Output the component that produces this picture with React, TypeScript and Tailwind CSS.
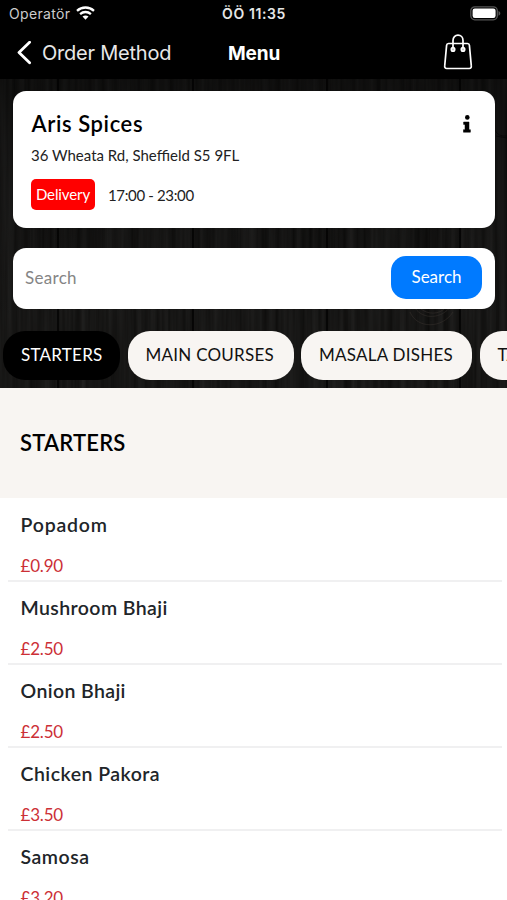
const items = [
  { name: "Popadom", price: "£0.90", cls: "tracking-[0.8px]" },
  { name: "Mushroom Bhaji", price: "£2.50", cls: "tracking-[0.4px]" },
  { name: "Onion Bhaji", price: "£2.50", cls: "tracking-[0.38px]" },
  { name: "Chicken Pakora", price: "£3.50", cls: "tracking-[0.48px]" },
  { name: "Samosa", price: "£3.20", cls: "tracking-[0.5px]" },
];

const categories = [
  { label: "STARTERS", cls: "w-[117px] bg-black text-white" },
  { label: "MAIN COURSES", cls: "w-[166px] bg-[#f8f5f2] text-[#111]" },
  { label: "MASALA DISHES", cls: "w-[171px] bg-[#f8f5f2] text-[#111]" },
  { label: "TANDOORI DISHES", cls: "w-[190px] bg-[#f8f5f2] text-[#111]" },
];

function Wood() {
  const seams = [57, 192, 326, 459];
  return (
    <svg className="absolute inset-0 h-full w-full" viewBox="0 0 507 309" preserveAspectRatio="none" aria-hidden="true">
      <filter id="grain" x="0" y="0" width="100%" height="100%" colorInterpolationFilters="sRGB">
        <feTurbulence type="fractalNoise" baseFrequency="0.16 0.004" numOctaves="4" seed="8" />
        <feColorMatrix values="0.11 0 0 0 0.034  0.11 0 0 0 0.032  0.11 0 0 0 0.028  0 0 0 0 1" />
      </filter>
      <linearGradient id="shade" x1="0" y1="0" x2="0" y2="1">
        <stop offset="0" stopColor="#000" stopOpacity="0.35" />
        <stop offset="0.8" stopColor="#000" stopOpacity="0" />
      </linearGradient>
      <rect width="507" height="309" filter="url(#grain)" />
      {seams.map((x) => (
        <rect key={x} x={x} width="2" height="309" fill="#000" opacity="0.7" />
      ))}
      <g fill="none" stroke="#3a3530" strokeWidth="0.8" opacity="0.6">
        <path d="M415 229c8 12 27 11 36-2M420 229c7 7 20 7 26-1M410 233c7 17 32 17 43 0" />
        <path d="M495 51q3 7 12 6M496 57q5 1 11 2" stroke="#000" />
      </g>
      <rect width="507" height="309" fill="url(#shade)" />
    </svg>
  );
}

function StatusBar() {
  return (
    <div className="flex h-[27px] items-center bg-black font-['Inter',sans-serif] text-[14px] leading-[27px] text-[#e6e6e6]">
      <div className="flex flex-1 items-center gap-[6px] pl-[9px]">
        <span className="tracking-[0.35px] text-[#ccc]">Operatör</span>
        <svg className="-mt-[1px]" width="19" height="14" viewBox="0 0 19 14" fill="none" stroke="#fff" strokeWidth="2.3">
          <path d="M1 4.8C5.8.4 13.2.4 18 4.8" />
          <path d="M4.1 8.1c3.1-2.8 7.7-2.8 10.8 0" />
          <path d="M6.5 10.6 9.5 13.7l3-3.1c-1.7-1.5-4.3-1.5-6 0Z" fill="#fff" stroke="none" />
        </svg>
      </div>
      <span className="-ml-[2px] font-semibold tracking-[0.6px]">ÖÖ 11:35</span>
      <div className="flex flex-1 justify-end pr-[6px]">
        <svg width="31" height="15" viewBox="0 0 31 15">
          <rect x="0.8" y="0.8" width="26.5" height="13" rx="4" fill="none" stroke="#555" strokeWidth="1.3" />
          <rect x="2.6" y="2.6" width="23" height="9.4" rx="2.2" fill="#fff" />
          <path d="M28.5 5v4.8c2.4-.9 2.4-3.9 0-4.8Z" fill="#555" />
        </svg>
      </div>
    </div>
  );
}

function NavBar() {
  return (
    <div className="flex h-[52px] items-center bg-black font-['Inter',sans-serif] text-white">
      <div className="flex w-[228px] items-center gap-[10px] pl-[17px]">
        <svg width="15" height="24" viewBox="0 0 15 24" fill="none" stroke="#fff" strokeWidth="2.8" strokeLinecap="round" strokeLinejoin="round">
          <path d="M12.6 1.2 2 11.4l10.6 10.4" />
        </svg>
        <span className="whitespace-nowrap text-[20px] tracking-[-0.22px] text-[#e8e8e8]">Order Method</span>
      </div>
      <span className="mt-[2px] text-[19px] font-bold tracking-[-0.15px]">Menu</span>
      <div className="flex flex-1 justify-end pr-[34px]">
        <svg className="-mt-[2px]" width="30" height="36" viewBox="0 0 30 36" fill="none" stroke="#fff" strokeWidth="1.7" strokeLinejoin="round">
          <path d="M5.5 9.5h19c1.3 0 1.8.6 1.9 1.8l1.9 20.6c.2 1.7-.6 2.6-2 2.6H3.7c-1.4 0-2.2-.9-2-2.6l1.9-20.6c.1-1.2.6-1.8 1.9-1.8Z" />
          <path d="M10 14V6.5C10 3.3 12.2 1.2 15 1.2s5 2.1 5 5.3V14" />
          <circle cx="10" cy="15.4" r="1.7" fill="#bbb" />
          <circle cx="20" cy="15.4" r="1.7" fill="#bbb" />
        </svg>
      </div>
    </div>
  );
}

export default function App() {
  return (
    <div className="h-[900px] w-full overflow-hidden bg-white font-['Lato','Noto_Sans',sans-serif]">
      <StatusBar />
      <NavBar />
      <section className="relative h-[309px] overflow-hidden bg-[#141413]">
        <Wood />
        <div className="relative flex flex-col pt-[12px]">
          <div className="ml-[13px] flex h-[137px] w-[482px] justify-between rounded-[13px] bg-white pl-[18px] pr-[24px] pt-[18px]">
            <div>
              <h1 className="pl-[0.5px] text-[22px] font-semibold leading-[30px] tracking-[0.6px] text-black">Aris Spices</h1>
              <p className="mt-[6px] text-[15px] leading-[20px] text-[#222]">36 Wheata Rd, Sheffield S5 9FL</p>
              <div className="mt-[14px] flex items-center gap-[13px]">
                <span className="flex h-[31px] w-[64px] items-center justify-center rounded-[5px] bg-[#f00] text-[15px] tracking-[-0.1px] text-white">Delivery</span>
                <span className="pt-[1px] text-[15px] tracking-[-0.35px] text-[#222]">17:00 - 23:00</span>
              </div>
            </div>
            <svg className="mt-[6px]" width="8" height="18" viewBox="0 0 8 18">
              <circle cx="4.3" cy="2.4" r="2.3" />
              <path d="M.6 7H6v7.7h1.4v2.5H.4v-2.5H2V9.4H.6Z" stroke="#000" strokeWidth=".5" strokeLinejoin="round" />
            </svg>
          </div>
          <div className="ml-[13px] mt-[20px] flex h-[61px] w-[482px] items-center justify-between rounded-[13px] bg-white pl-[12px] pr-[13px]">
            <span className="-mt-[2px] text-[17px] tracking-[0.3px] text-[#858585]">Search</span>
            <button className="mb-[2px] h-[43px] w-[91px] rounded-[15px] bg-[#007aff] pb-[2px] text-[17px] text-white">Search</button>
          </div>
          <div className="ml-[3px] mt-[22px] flex w-[700px] gap-[7.5px]">
            {categories.map((c) => (
              <span key={c.label} className={"flex h-[49px] shrink-0 items-center pb-[2px] pl-[18px] rounded-[22px] text-[17px] tracking-[0.25px] whitespace-nowrap " + c.cls}>
                {c.label}
              </span>
            ))}
          </div>
        </div>
      </section>
      <div className="flex h-[110px] items-center bg-[#f8f5f2] pb-[1px] pl-[20px]">
        <h2 className="text-[22px] font-semibold tracking-[0.2px] text-black">STARTERS</h2>
      </div>
      <ul className="ml-[8px] mr-[5px] pt-[1px]">
        {items.map((i) => (
          <li key={i.name} className="h-[83px] border-b-2 border-[#f0f0f1] pl-[12.5px] pt-[12px]">
            <div className={"text-[19.5px] font-semibold leading-[28px] text-[#212529] " + i.cls}>{i.name}</div>
            <div className="mt-[15px] text-[17px] leading-[24px] tracking-[-0.2px] text-[#cc2f36]">{i.price}</div>
          </li>
        ))}
      </ul>
    </div>
  );
}
